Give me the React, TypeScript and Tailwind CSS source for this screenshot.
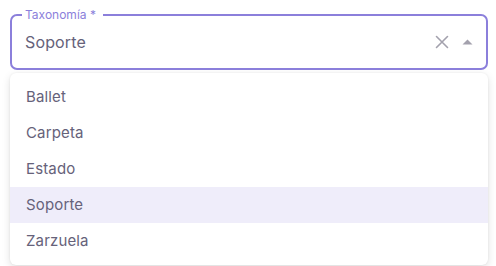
import React from "react";

const options = ["Ballet", "Carpeta", "Estado", "Soporte", "Zarzuela"];

export default function App() {
  const selected = "Soporte";

  return (
    <div
      className="w-[496px] h-[266px] bg-white pt-[14px] pl-[10px] pr-[8px]"
      style={{ fontFamily: "Inter, 'Noto Sans', sans-serif" }}
    >
      <div className="relative h-[56px] rounded-[7px] border-2 border-[#8b7fdb] flex items-center pl-[13px] pr-[13px]">
        <span className="absolute left-[10px] -top-[9px] bg-white pl-[3px] pr-[7px] text-[12px] leading-[16px] text-[#8b7fdb]">
          Taxonomía *
        </span>
        <span className="flex-1 text-[16px] tracking-[0.15px] text-[#66627a]">{selected}</span>
        <svg width="14" height="14" viewBox="0 0 14 14" className="mr-[13px]">
          <path d="M1.5 1.5L12.5 12.5M12.5 1.5L1.5 12.5" stroke="#a3a1ad" strokeWidth="1.6" strokeLinecap="round" />
        </svg>
        <svg width="11" height="6" viewBox="0 0 11 6">
          <path d="M0.5 5.5L5.5 0.5L10.5 5.5Z" fill="#a3a1ad" />
        </svg>
      </div>
      <div className="mt-[3px] rounded-[6px] bg-white py-[6px] shadow-[0_3px_8px_rgba(0,0,0,0.12),0_0_2px_rgba(0,0,0,0.08)]">
        {options.map((o) => (
          <div
            key={o}
            className={`h-[36px] flex items-center px-[16px] text-[15px] tracking-[0.15px] text-[#66627a] ${
              o === selected ? "bg-[#efedfa]" : ""
            }`}
          >
            {o}
          </div>
        ))}
      </div>
    </div>
  );
}
